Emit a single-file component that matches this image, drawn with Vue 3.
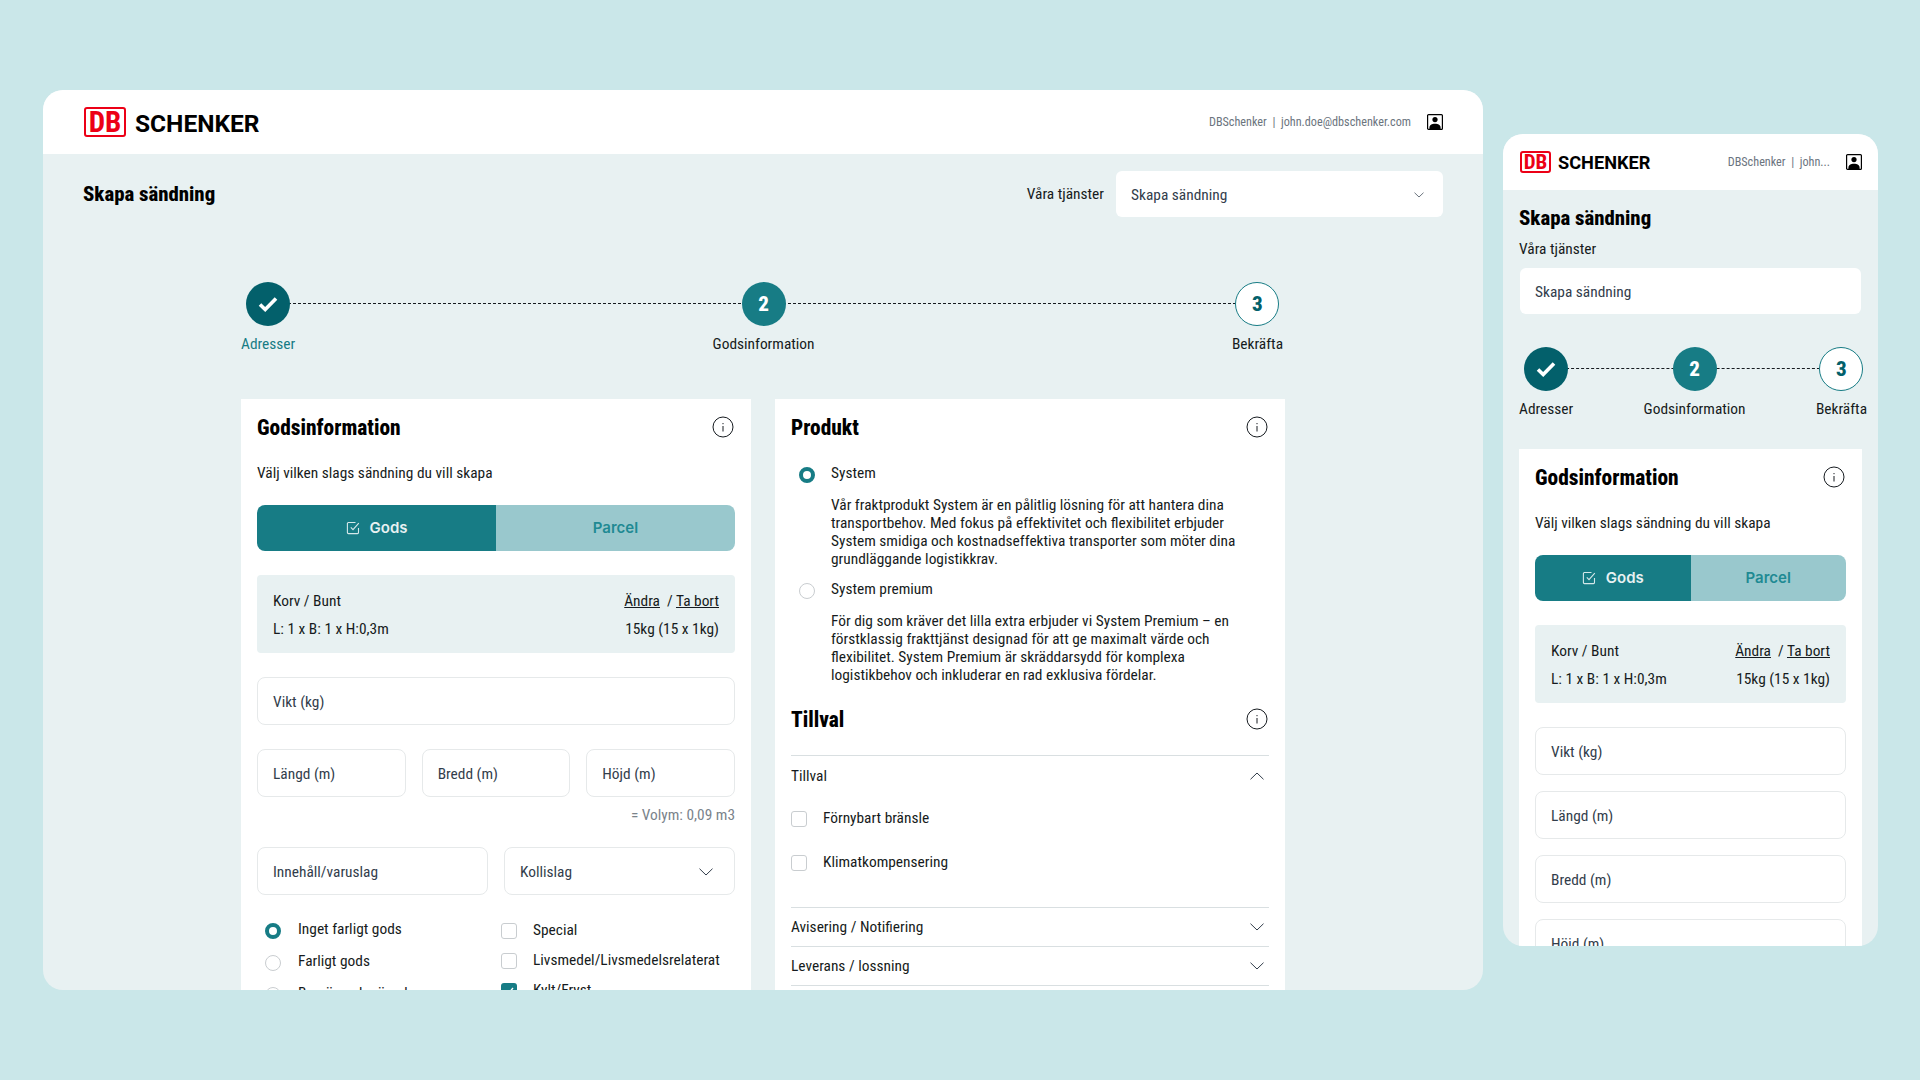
<template>
  <div class="page">
    <!-- desktop -->
    <section class="window desktop">
      <header class="topbar">
        <div class="logo">
          <span class="logo-db">DB</span>
          <span class="logo-name">SCHENKER</span>
        </div>
        <div class="user">
          <span class="user-text">DBSchenker&nbsp;&nbsp;|&nbsp;&nbsp;john.doe@dbschenker.com</span>
          <svg class="user-icon" viewBox="0 0 16 16">
            <rect x="0.6" y="0.6" width="14.8" height="14.8" rx="1" fill="#fff" stroke="#000" stroke-width="1.2" />
            <circle cx="8" cy="5.6" r="2.6" fill="#000" />
            <path d="M2.4 15.4v-1.6c0-2.6 2.4-4 5.6-4s5.6 1.4 5.6 4v1.6z" fill="#000" />
          </svg>
        </div>
      </header>

      <div class="title-row">
        <h1 class="page-title">Skapa sändning</h1>
        <div class="service">
          <span class="service-label">Våra tjänster</span>
          <div class="service-select">
            <span>Skapa sändning</span>
            <svg class="select-chevron" viewBox="0 0 10 6"><path d="M0.5 0.7 5 5 9.5 0.7" /></svg>
          </div>
        </div>
      </div>

      <div class="stepper stepper-desktop">
        <div class="step-line"></div>
        <div v-for="step in steps" :key="step.label" class="step">
          <div class="circle" :class="step.kind">
            <svg v-if="step.kind === 'done'" class="tick" viewBox="0 0 20 16"><path d="M2 8.5 7.2 13.5 18 2.5" /></svg>
            <template v-else>{{ step.num }}</template>
          </div>
          <span class="step-label" :class="{ teal: step.kind === 'done' }">{{ step.label }}</span>
        </div>
      </div>

      <div class="columns">
        <div class="card">
          <div class="card-head">
            <h2>Godsinformation</h2>
            <svg class="info" viewBox="0 0 22 22">
              <circle cx="11" cy="11" r="10" />
              <path d="M11 10v5.5M11 7v1.2" />
            </svg>
          </div>
          <p class="lead">Välj vilken slags sändning du vill skapa</p>
          <div class="segment">
            <div class="seg seg-on">
              <svg class="seg-icon" viewBox="0 0 14 14">
                <path d="M12.5 7v4.6a1 1 0 0 1-1 1H2.4a1 1 0 0 1-1-1V2.5a1 1 0 0 1 1-1h7.1" />
                <path d="M4.8 6.4 7 8.6 12.8 2.2" />
              </svg>
              Gods
            </div>
            <div class="seg seg-off">Parcel</div>
          </div>
          <div class="goods">
            <div class="goods-row">
              <span>Korv / Bunt</span>
              <span><u>Ändra</u>&nbsp; / <u>Ta bort</u></span>
            </div>
            <div class="goods-row">
              <span>L: 1 x B: 1 x H:0,3m</span>
              <span>15kg (15 x 1kg)</span>
            </div>
          </div>
          <div class="input gap-24">Vikt (kg)</div>
          <div class="input-row three gap-24">
            <div class="input">Längd (m)</div>
            <div class="input">Bredd (m)</div>
            <div class="input">Höjd (m)</div>
          </div>
          <p class="volume">= Volym: 0,09 m3</p>
          <div class="input-row two">
            <div class="input">Innehåll/varuslag</div>
            <div class="input input-select">
              Kollislag
              <svg class="chevron" viewBox="0 0 14 8"><path d="M0.5 0.7 7 7 13.5 0.7" /></svg>
            </div>
          </div>
          <div class="options">
            <div class="option-col radios">
              <div v-for="(item, i) in dangerOptions" :key="item" class="option">
                <span class="radio" :class="{ on: i === 0 }"></span>
                <span class="radio-text">{{ item }}</span>
              </div>
            </div>
            <div class="option-col checks">
              <div v-for="item in extraOptions" :key="item.label" class="option">
                <span class="box" :class="{ on: item.on }">
                  <svg v-if="item.on" viewBox="0 0 16 16"><path d="M4 8.2 7 11 12 5" /></svg>
                </span>
                <span class="check-text">{{ item.label }}</span>
              </div>
            </div>
          </div>
        </div>

        <div class="card">
          <div class="card-head">
            <h2>Produkt</h2>
            <svg class="info" viewBox="0 0 22 22">
              <circle cx="11" cy="11" r="10" />
              <path d="M11 10v5.5M11 7v1.2" />
            </svg>
          </div>
          <div class="product first">
            <span class="radio on"></span>
            <span class="radio-text">System</span>
          </div>
          <p class="product-text">Vår fraktprodukt System är en pålitlig lösning för att hantera dina transportbehov. Med fokus på effektivitet och flexibilitet erbjuder System smidiga och kostnadseffektiva transporter som möter dina grundläggande logistikkrav.</p>
          <div class="product">
            <span class="radio"></span>
            <span class="radio-text">System premium</span>
          </div>
          <p class="product-text">För dig som kräver det lilla extra erbjuder vi System Premium – en förstklassig frakttjänst designad för att ge maximalt värde och flexibilitet. System Premium är skräddarsydd för komplexa logistikbehov och inkluderar en rad exklusiva fördelar.</p>
          <div class="card-head tillval">
            <h2>Tillval</h2>
            <svg class="info" viewBox="0 0 22 22">
              <circle cx="11" cy="11" r="10" />
              <path d="M11 10v5.5M11 7v1.2" />
            </svg>
          </div>
          <div class="accordion-open">
            <div class="accordion-head">
              <span>Tillval</span>
              <svg class="chevron" viewBox="0 0 14 8"><path d="M0.5 7.3 7 1 13.5 7.3" /></svg>
            </div>
            <div class="accordion-check first">
              <span class="box"></span>
              <span class="check-text">Förnybart bränsle</span>
            </div>
            <div class="accordion-check">
              <span class="box"></span>
              <span class="check-text">Klimatkompensering</span>
            </div>
          </div>
          <div v-for="row in accordionRows" :key="row" class="accordion-row">
            <span>{{ row }}</span>
            <svg class="chevron" viewBox="0 0 14 8"><path d="M0.5 0.7 7 7 13.5 0.7" /></svg>
          </div>
        </div>
      </div>
    </section>

    <!-- mobile -->
    <section class="window mobile">
      <header class="topbar">
        <div class="logo">
          <span class="logo-db">DB</span>
          <span class="logo-name">SCHENKER</span>
        </div>
        <div class="user">
          <span class="user-text">DBSchenker&nbsp;&nbsp;|&nbsp;&nbsp;john...</span>
          <svg class="user-icon" viewBox="0 0 16 16">
            <rect x="0.6" y="0.6" width="14.8" height="14.8" rx="1" fill="#fff" stroke="#000" stroke-width="1.2" />
            <circle cx="8" cy="5.6" r="2.6" fill="#000" />
            <path d="M2.4 15.4v-1.6c0-2.6 2.4-4 5.6-4s5.6 1.4 5.6 4v1.6z" fill="#000" />
          </svg>
        </div>
      </header>

      <div class="mobile-title">
        <h1 class="page-title">Skapa sändning</h1>
        <span class="service-label">Våra tjänster</span>
        <div class="service-select">Skapa sändning</div>
      </div>

      <div class="stepper stepper-mobile">
        <div class="step-line"></div>
        <div v-for="step in steps" :key="step.label" class="step">
          <div class="circle" :class="step.kind">
            <svg v-if="step.kind === 'done'" class="tick" viewBox="0 0 20 16"><path d="M2 8.5 7.2 13.5 18 2.5" /></svg>
            <template v-else>{{ step.num }}</template>
          </div>
          <span class="step-label">{{ step.label }}</span>
        </div>
      </div>

      <div class="card mobile-card">
        <div class="card-head">
          <h2>Godsinformation</h2>
          <svg class="info" viewBox="0 0 22 22">
            <circle cx="11" cy="11" r="10" />
            <path d="M11 10v5.5M11 7v1.2" />
          </svg>
        </div>
        <p class="lead">Välj vilken slags sändning du vill skapa</p>
        <div class="segment">
          <div class="seg seg-on">
            <svg class="seg-icon" viewBox="0 0 14 14">
              <path d="M12.5 7v4.6a1 1 0 0 1-1 1H2.4a1 1 0 0 1-1-1V2.5a1 1 0 0 1 1-1h7.1" />
              <path d="M4.8 6.4 7 8.6 12.8 2.2" />
            </svg>
            Gods
          </div>
          <div class="seg seg-off">Parcel</div>
        </div>
        <div class="goods">
          <div class="goods-row">
            <span>Korv / Bunt</span>
            <span><u>Ändra</u>&nbsp; / <u>Ta bort</u></span>
          </div>
          <div class="goods-row">
            <span>L: 1 x B: 1 x H:0,3m</span>
            <span>15kg (15 x 1kg)</span>
          </div>
        </div>
        <div class="mobile-inputs">
          <div v-for="field in mobileFields" :key="field" class="input">{{ field }}</div>
        </div>
      </div>
    </section>
  </div>
</template>

<script setup>
const steps = [
  { label: 'Adresser', kind: 'done' },
  { label: 'Godsinformation', kind: 'current', num: 2 },
  { label: 'Bekräfta', kind: 'todo', num: 3 },
]

const dangerOptions = ['Inget farligt gods', 'Farligt gods', 'Begränsad mängd']

const extraOptions = [
  { label: 'Special', on: false },
  { label: 'Livsmedel/Livsmedelsrelaterat', on: false },
  { label: 'Kylt/Fryst', on: true },
]

const accordionRows = ['Avisering / Notifiering', 'Leverans / lossning']

const mobileFields = ['Vikt (kg)', 'Längd (m)', 'Bredd (m)', 'Höjd (m)']
</script>

<style>
html,
body {
  margin: 0;
  background: #cae7e9;
}
</style>

<style scoped>
.page {
  display: flex;
  align-items: flex-start;
  gap: 20px;
  box-sizing: border-box;
  width: 1920px;
  height: 1080px;
  padding: 90px 0 0 43px;
  overflow: hidden;
  background: #cae7e9;
  font-family: 'Roboto Condensed', Roboto, sans-serif;
  font-stretch: 75%;
  font-size: 15.4px;
  line-height: 18px;
  color: #161b20;
}

h1,
h2,
p {
  margin: 0;
}

.window {
  flex: none;
  display: flex;
  flex-direction: column;
  overflow: hidden;
  border-radius: 20px;
  background: #e8f1f2;
}

.desktop {
  width: 1440px;
  height: 900px;
}

.mobile {
  width: 375px;
  height: 812px;
  margin-top: 44px;
}

.topbar {
  flex: none;
  display: flex;
  align-items: center;
  justify-content: space-between;
  background: #fff;
}

.desktop .topbar {
  height: 64px;
  padding: 0 40px 0 41px;
}

.mobile .topbar {
  height: 56px;
  padding: 0 16px 0 17px;
}

.logo {
  display: flex;
  align-items: center;
}

.logo-db {
  display: flex;
  align-items: center;
  justify-content: center;
  box-sizing: border-box;
  border: 2.5px solid #ec0016;
  border-radius: 3px;
  font-weight: 700;
  color: #ec0016;
}

.logo-name {
  font-family: Roboto, sans-serif;
  font-stretch: 100%;
  font-weight: 700;
  color: #000;
}

.desktop .logo-db {
  width: 42px;
  height: 30px;
  font-size: 29px;
}

.desktop .logo-name {
  margin-left: 9px;
  padding-top: 3px;
  font-size: 24.5px;
}

.mobile .logo-db {
  width: 31px;
  height: 22px;
  font-size: 21px;
  border-width: 2px;
}

.mobile .logo-name {
  margin-left: 7px;
  padding-top: 2px;
  font-size: 18.2px;
}

.user {
  display: flex;
  align-items: center;
  gap: 16px;
}

.user-text {
  font-size: 12.2px;
  color: #6b747e;
}

.user-icon {
  width: 16px;
  height: 16px;
}

.title-row {
  flex: none;
  display: flex;
  align-items: center;
  justify-content: space-between;
  padding: 17px 40px 0;
}

.page-title {
  padding-top: 1px;
  font-size: 20.8px;
  line-height: 23px;
  font-weight: 800;
  color: #000;
}

.service {
  display: flex;
  align-items: center;
  gap: 12px;
}

.service-select {
  box-sizing: border-box;
  display: flex;
  align-items: center;
  justify-content: space-between;
  height: 46px;
  padding: 1px 15px 0;
  border-radius: 6px;
  background: #fff;
  color: #323d4b;
}

.title-row .service-select {
  width: 327px;
}

.select-chevron {
  width: 10px;
  height: 6px;
  margin-right: 4px;
  fill: none;
  stroke: #6b747e;
  stroke-width: 1;
}

.stepper {
  position: relative;
  display: flex;
  justify-content: space-between;
}

.stepper-desktop {
  margin: 65px 200px 0 198px;
}

.stepper-mobile {
  margin: 33px 11px 0 16px;
}

.step-line {
  position: absolute;
  top: 21px;
  left: 27px;
  right: 27px;
  border-top: 1px dashed #161b20;
}

.step {
  position: relative;
  display: flex;
  flex-direction: column;
  align-items: center;
}

.circle {
  box-sizing: border-box;
  display: flex;
  align-items: center;
  justify-content: center;
  width: 44px;
  height: 44px;
  border-radius: 50%;
  font-size: 21px;
  font-weight: 800;
}

.circle.done {
  background: #03606b;
}

.circle.current {
  background: #177c85;
  color: #fff;
}

.circle.todo {
  border: 1px solid #177c85;
  background: #fff;
  color: #03606b;
}

.tick {
  width: 20px;
  height: 16px;
  fill: none;
  stroke: #fff;
  stroke-width: 3.6;
}

.step-label {
  margin-top: 9px;
}

.step-label.teal {
  color: #177c85;
}

.columns {
  flex: none;
  display: flex;
  gap: 24px;
  margin: 46px 198px 0;
}

.card {
  box-sizing: border-box;
  flex: 1 1 0;
  min-width: 0;
  padding: 16px;
  background: #fff;
}

.card-head {
  display: flex;
  align-items: center;
  justify-content: space-between;
}

.card-head h2 {
  padding-top: 2px;
  font-size: 21.4px;
  line-height: 22px;
  font-weight: 800;
  color: #000;
}

.info {
  width: 22px;
  height: 22px;
  margin-right: 1px;
  fill: none;
  stroke: #161b20;
  stroke-width: 1;
}

.lead {
  margin-top: 25px;
}

.segment {
  display: flex;
  height: 46px;
  margin-top: 23px;
  overflow: hidden;
  border-radius: 8px;
  font-family: Inter, sans-serif;
  font-stretch: 100%;
  font-size: 15px;
  font-weight: 600;
}

.seg {
  flex: 1;
  display: flex;
  align-items: center;
  justify-content: center;
}

.seg-on {
  gap: 10px;
  background: #177c85;
  color: #e8f1f2;
}

.seg-off {
  background: #99c8cd;
  color: #1f8a93;
}

.seg-icon {
  width: 14px;
  height: 14px;
  fill: none;
  stroke: #d5e8ea;
  stroke-width: 1.1;
}

.goods {
  display: flex;
  flex-direction: column;
  gap: 10px;
  margin-top: 24px;
  padding: 17px 16px 15px;
  border-radius: 4px;
  background: #e8f1f2;
}

.goods-row {
  display: flex;
  justify-content: space-between;
}

.input {
  box-sizing: border-box;
  display: flex;
  align-items: center;
  justify-content: space-between;
  height: 48px;
  padding: 1px 15px 0;
  border: 1px solid #e6e9ea;
  border-radius: 8px;
  background: #fff;
  color: #323d4b;
}

.gap-24 {
  margin-top: 24px;
}

.input-row {
  display: grid;
  gap: 16px;
}

.input-row.three {
  grid-template-columns: repeat(3, 1fr);
}

.input-row.two {
  grid-template-columns: repeat(2, 1fr);
  margin-top: 23px;
}

.volume {
  margin-top: 9px;
  text-align: right;
  color: #7a838b;
}

.chevron {
  width: 14px;
  height: 8px;
  fill: none;
  stroke: #323d4b;
  stroke-width: 1;
}

.input-select .chevron {
  margin-right: 6px;
}

.options {
  display: grid;
  grid-template-columns: 244px 1fr;
  margin-top: 28px;
}

.option-col {
  display: flex;
  flex-direction: column;
}

.radios {
  gap: 16px;
  padding-left: 8px;
}

.checks {
  gap: 14px;
}

.option {
  display: flex;
  align-items: center;
  height: 16px;
}

.radios .option {
  gap: 17px;
}

.checks .option {
  gap: 16px;
}

.radio {
  flex: none;
  box-sizing: border-box;
  width: 16px;
  height: 16px;
  border: 1px solid #c9cdd0;
  border-radius: 50%;
  background: #fff;
}

.radio.on {
  border: 4.5px solid #177c85;
}

.radio-text {
  margin-bottom: 4px;
}

.check-text {
  margin-bottom: 2px;
}

.box {
  flex: none;
  box-sizing: border-box;
  display: block;
  width: 16px;
  height: 16px;
  border: 1px solid #c9cdd0;
  border-radius: 3px;
  background: #fff;
}

.box.on {
  border: 0;
  background: #177c85;
}

.box svg {
  display: block;
  fill: none;
  stroke: #fff;
  stroke-width: 1.4;
}

.product {
  display: flex;
  align-items: center;
  gap: 16px;
  height: 16px;
  margin: 15px 0 0 8px;
}

.product.first {
  margin-top: 28px;
}

.product-text {
  margin: 13px 0 0 40px;
  padding-right: 24px;
}

.tillval {
  margin-top: 23px;
}

.accordion-open {
  margin-top: 24px;
  padding-bottom: 36px;
  border-top: 1px solid #d9dfe1;
  border-bottom: 1px solid #d9dfe1;
}

.accordion-head {
  display: flex;
  align-items: center;
  justify-content: space-between;
  height: 40px;
}

.accordion-head .chevron,
.accordion-row .chevron {
  margin-right: 5px;
}

.accordion-check {
  display: flex;
  align-items: center;
  gap: 16px;
  height: 16px;
  margin-top: 28px;
}

.accordion-check.first {
  margin-top: 15px;
}

.accordion-row {
  box-sizing: border-box;
  display: flex;
  align-items: center;
  justify-content: space-between;
  height: 39px;
  border-bottom: 1px solid #d9dfe1;
}

.mobile-title {
  flex: none;
  display: flex;
  flex-direction: column;
  padding: 16px 16px 0;
}

.mobile-title .service-label {
  margin-top: 10px;
}

.mobile-title .service-select {
  margin: 10px 1px 0;
}

.mobile-card {
  flex: none;
  margin: 31px 16px 0;
}

.mobile-inputs {
  display: flex;
  flex-direction: column;
  gap: 16px;
  margin-top: 24px;
}
</style>
